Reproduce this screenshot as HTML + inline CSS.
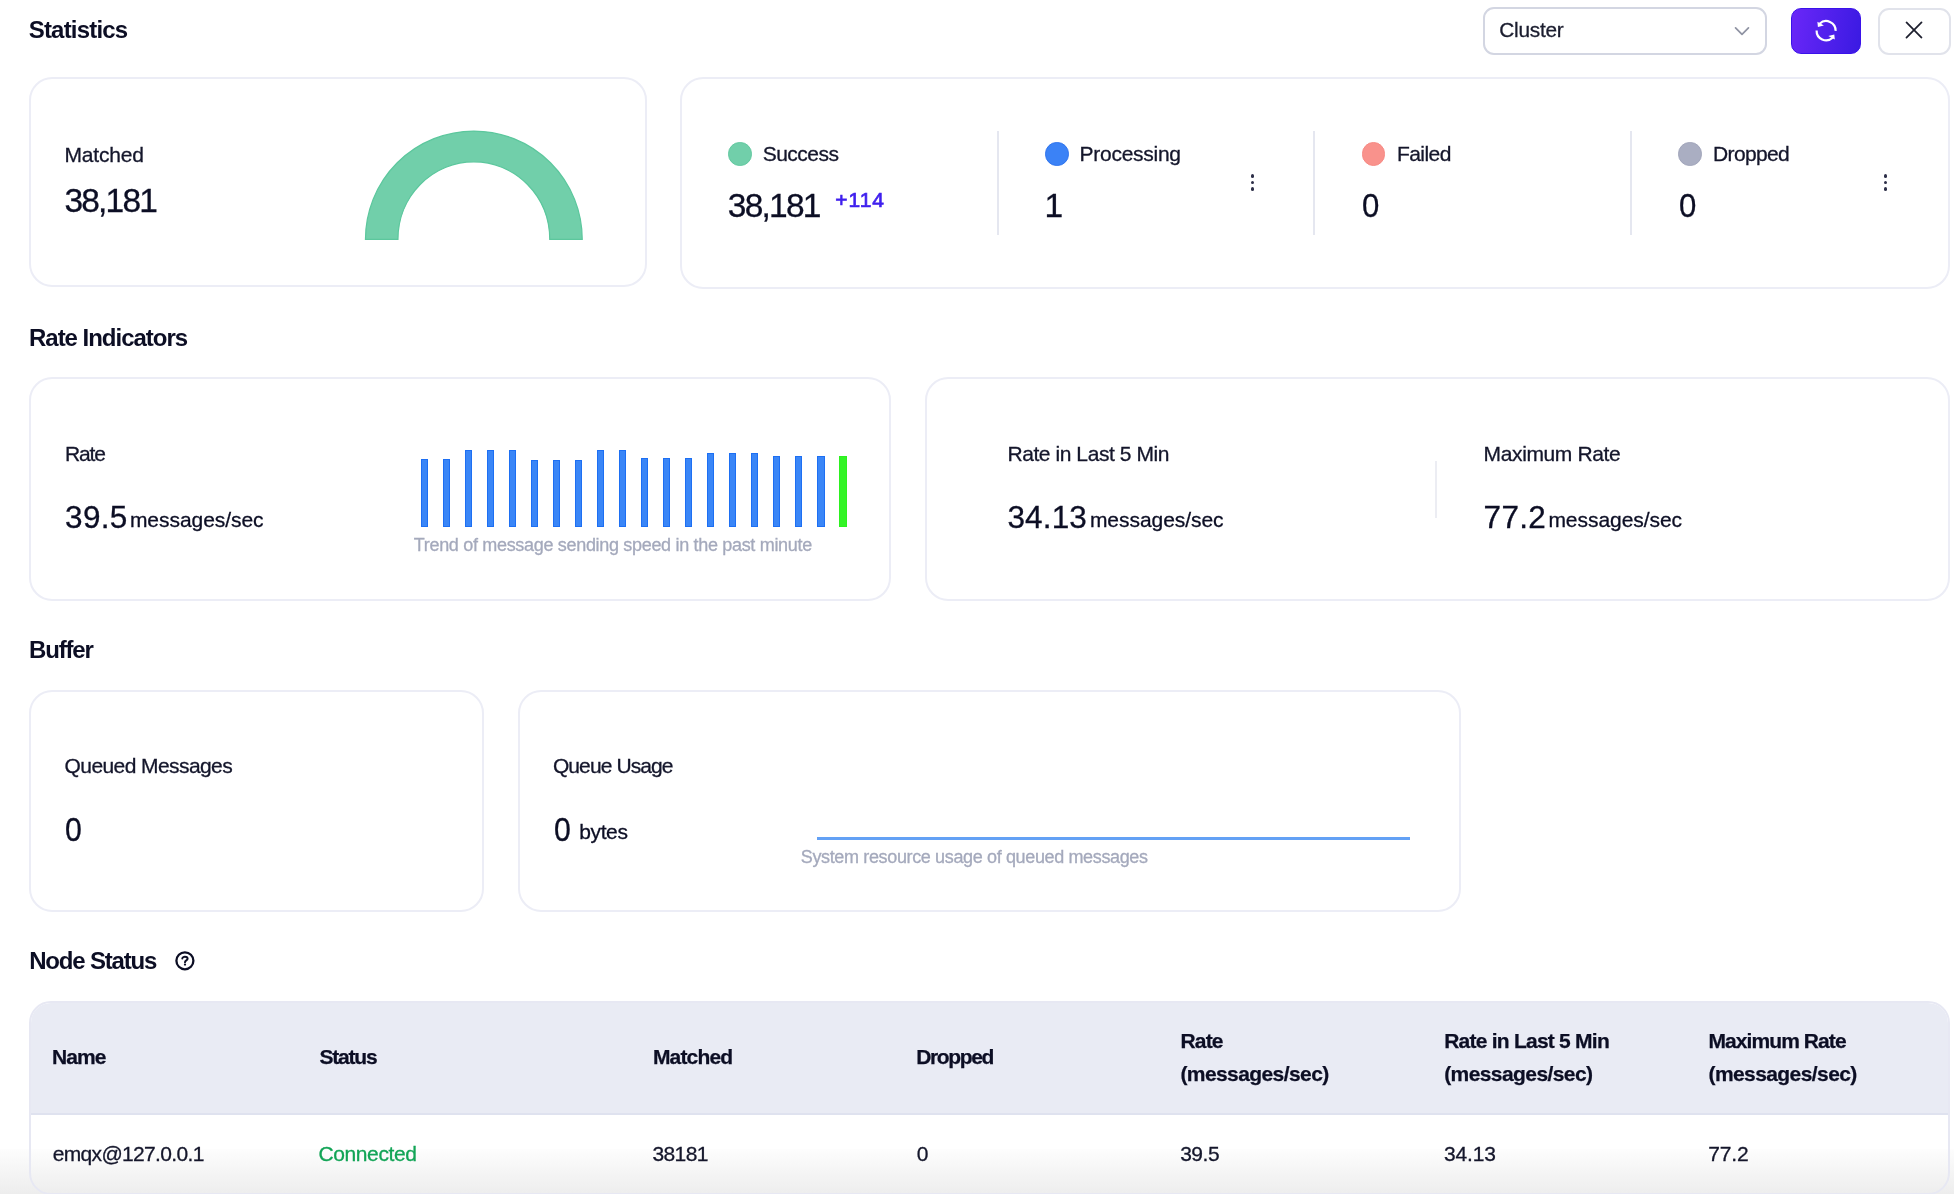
<!DOCTYPE html>
<html lang="en"><head><meta charset="utf-8"><title>Statistics</title>
<style>
html,body{margin:0;padding:0;background:#fff;overflow:hidden;}
body{width:1954px;height:1194px;position:relative;overflow:hidden;font-family:"Liberation Sans",sans-serif;}
.abs{position:absolute;}
.t{position:absolute;margin:0;padding:0;white-space:nowrap;line-height:1;font-family:"Liberation Sans",sans-serif;}
.card{position:absolute;box-sizing:border-box;border:2px solid #ecedf6;background:#fff;}
.dot{position:absolute;box-sizing:border-box;border-radius:50%;}
</style></head><body>
<div class="abs" style="left:0;top:1149px;width:1954px;height:45px;background:linear-gradient(#fdfdfd,#ededed)"></div>
<div class="abs" style="left:1483px;top:7.0px;width:284.4px;height:47.7px;box-sizing:border-box;border:2px solid #d3d6e2;border-radius:11px;background:#fff"></div>
<svg class="abs" style="left:1731px;top:22px" width="22" height="18" viewBox="0 0 22 18"><path d="M4.55 5.8 L11 12.3 L17.45 5.8" fill="none" stroke="#8f93a3" stroke-width="1.7" stroke-linecap="round" stroke-linejoin="round"/></svg>
<div class="abs" style="left:1791px;top:7.7px;width:69.5px;height:46.5px;box-sizing:border-box;border-radius:10px;border:1.5px solid #3a12ea;background:linear-gradient(100deg,#6a27f8,#3a1ae2)"></div>
<svg class="abs" style="left:1810px;top:14px" width="34" height="34" viewBox="1810 14 34 34"><g fill="none" stroke="#fff" stroke-width="2.2"><path d="M1835.6 30.9 A9.5 9.5 0 0 0 1819.6 23.7"/><path d="M1816.6 30.5 A9.5 9.5 0 0 0 1832.6 37.7"/></g><path fill="#fff" d="M1817.4 21.8 L1823.9 25.4 L1817.9 27.0 Z M1834.8 39.6 L1828.3 36.0 L1834.3 34.4 Z"/></svg>
<div class="abs" style="left:1877.5px;top:7.5px;width:73px;height:47px;box-sizing:border-box;border:2px solid #e1e3eb;border-radius:11px;background:#fff"></div>
<svg class="abs" style="left:1900px;top:16.2px" width="28" height="28" viewBox="0 0 1024 1024"><path fill="#1d1f2e" d="M764.288 214.592 512 466.88 259.712 214.592a31.936 31.936 0 0 0-45.12 45.12L466.752 512 214.528 764.224a31.936 31.936 0 1 0 45.12 45.184L512 557.184l252.288 252.288a31.936 31.936 0 0 0 45.12-45.12L557.12 512.064l252.288-252.352a31.936 31.936 0 1 0-45.12-45.184z"/></svg>
<div class="card" style="left:28.65px;top:76.65px;width:617.95px;height:210.25px;border-radius:23.2px;border-width:2.4px"></div>
<div class="card" style="left:679.60px;top:76.65px;width:1270.60px;height:212.25px;border-radius:23.2px;border-width:2.4px"></div>
<div class="card" style="left:28.65px;top:377.20px;width:862.45px;height:223.70px;border-radius:23.2px;border-width:2.4px"></div>
<div class="card" style="left:924.80px;top:377.20px;width:1025.40px;height:223.70px;border-radius:23.2px;border-width:2.4px"></div>
<div class="card" style="left:28.65px;top:689.70px;width:455.25px;height:222.20px;border-radius:23.2px;border-width:2.4px"></div>
<div class="card" style="left:517.60px;top:689.70px;width:943.80px;height:222.20px;border-radius:23.2px;border-width:2.4px"></div>
<svg class="abs" style="left:360px;top:125px" width="230" height="120" viewBox="360 125 230 120"><path d="M365.45 239.4 A108.4 108.4 0 0 1 582.25 239.4 L549.75 239.4 A75.9 77.6 0 0 0 397.95 239.4 Z" fill="#71cfaa" stroke="#5cc79d" stroke-width="1.2"/></svg>
<div class="dot" style="left:728.25px;top:142.05px;width:23.5px;height:23.5px;background:#71cfaa;border:1.5px solid #62c9a0"></div>
<div class="dot" style="left:1045.35px;top:142.05px;width:23.5px;height:23.5px;background:#3b82f6;border:1.5px solid #2f74ee"></div>
<div class="dot" style="left:1361.55px;top:142.05px;width:23.5px;height:23.5px;background:#f9928c;border:1.5px solid #f78a84"></div>
<div class="dot" style="left:1678.25px;top:142.05px;width:23.5px;height:23.5px;background:#aaaec2;border:1.5px solid #a2a6bb"></div>
<div class="abs" style="left:996.50px;top:131px;width:2px;height:103.5px;background:#e5e7f0"></div>
<div class="abs" style="left:1313.20px;top:131px;width:2px;height:103.5px;background:#e5e7f0"></div>
<div class="abs" style="left:1629.90px;top:131px;width:2px;height:103.5px;background:#e5e7f0"></div>
<div class="abs" style="left:1250.60px;top:173.80px;width:3.8px;height:3.8px;border-radius:50%;background:#2d2f48"></div><div class="abs" style="left:1250.60px;top:180.60px;width:3.8px;height:3.8px;border-radius:50%;background:#2d2f48"></div><div class="abs" style="left:1250.60px;top:187.40px;width:3.8px;height:3.8px;border-radius:50%;background:#2d2f48"></div>
<div class="abs" style="left:1883.70px;top:173.80px;width:3.8px;height:3.8px;border-radius:50%;background:#2d2f48"></div><div class="abs" style="left:1883.70px;top:180.60px;width:3.8px;height:3.8px;border-radius:50%;background:#2d2f48"></div><div class="abs" style="left:1883.70px;top:187.40px;width:3.8px;height:3.8px;border-radius:50%;background:#2d2f48"></div>
<div class="abs" style="left:420.50px;top:458.8px;width:7.3px;height:68.00px;box-sizing:border-box;background:#3a86f7;border:1.4px solid #1d6ff3"></div><div class="abs" style="left:442.54px;top:458.8px;width:7.3px;height:68.00px;box-sizing:border-box;background:#3a86f7;border:1.4px solid #1d6ff3"></div><div class="abs" style="left:464.58px;top:450.4px;width:7.3px;height:76.40px;box-sizing:border-box;background:#3a86f7;border:1.4px solid #1d6ff3"></div><div class="abs" style="left:486.62px;top:450.4px;width:7.3px;height:76.40px;box-sizing:border-box;background:#3a86f7;border:1.4px solid #1d6ff3"></div><div class="abs" style="left:508.66px;top:450.4px;width:7.3px;height:76.40px;box-sizing:border-box;background:#3a86f7;border:1.4px solid #1d6ff3"></div><div class="abs" style="left:530.70px;top:460.2px;width:7.3px;height:66.60px;box-sizing:border-box;background:#3a86f7;border:1.4px solid #1d6ff3"></div><div class="abs" style="left:552.74px;top:460.2px;width:7.3px;height:66.60px;box-sizing:border-box;background:#3a86f7;border:1.4px solid #1d6ff3"></div><div class="abs" style="left:574.78px;top:460.2px;width:7.3px;height:66.60px;box-sizing:border-box;background:#3a86f7;border:1.4px solid #1d6ff3"></div><div class="abs" style="left:596.82px;top:450.4px;width:7.3px;height:76.40px;box-sizing:border-box;background:#3a86f7;border:1.4px solid #1d6ff3"></div><div class="abs" style="left:618.86px;top:450.4px;width:7.3px;height:76.40px;box-sizing:border-box;background:#3a86f7;border:1.4px solid #1d6ff3"></div><div class="abs" style="left:640.90px;top:457.5px;width:7.3px;height:69.30px;box-sizing:border-box;background:#3a86f7;border:1.4px solid #1d6ff3"></div><div class="abs" style="left:662.94px;top:457.5px;width:7.3px;height:69.30px;box-sizing:border-box;background:#3a86f7;border:1.4px solid #1d6ff3"></div><div class="abs" style="left:684.98px;top:457.5px;width:7.3px;height:69.30px;box-sizing:border-box;background:#3a86f7;border:1.4px solid #1d6ff3"></div><div class="abs" style="left:707.02px;top:452.8px;width:7.3px;height:74.00px;box-sizing:border-box;background:#3a86f7;border:1.4px solid #1d6ff3"></div><div class="abs" style="left:729.06px;top:452.8px;width:7.3px;height:74.00px;box-sizing:border-box;background:#3a86f7;border:1.4px solid #1d6ff3"></div><div class="abs" style="left:751.10px;top:452.8px;width:7.3px;height:74.00px;box-sizing:border-box;background:#3a86f7;border:1.4px solid #1d6ff3"></div><div class="abs" style="left:773.14px;top:456px;width:7.3px;height:70.80px;box-sizing:border-box;background:#3a86f7;border:1.4px solid #1d6ff3"></div><div class="abs" style="left:795.18px;top:456px;width:7.3px;height:70.80px;box-sizing:border-box;background:#3a86f7;border:1.4px solid #1d6ff3"></div><div class="abs" style="left:817.22px;top:456px;width:7.3px;height:70.80px;box-sizing:border-box;background:#3a86f7;border:1.4px solid #1d6ff3"></div><div class="abs" style="left:839.26px;top:456px;width:7.3px;height:70.80px;box-sizing:border-box;background:#33f426;border:1.4px solid #2df01f"></div>
<div class="abs" style="left:1435.10px;top:460.5px;width:2px;height:57.0px;background:#ecedf3"></div>
<div class="abs" style="left:817.4px;top:837.3px;width:592.4px;height:2.4px;background:#63a1f5"></div>
<svg class="abs" style="left:173px;top:948.9px" width="24" height="24" viewBox="0 0 24 24"><circle cx="11.9" cy="11.8" r="8.5" fill="none" stroke="#0c0e24" stroke-width="2.3"/><path d="M9.3 9.6 C9.3 7.2 14.6 7.2 14.6 9.7 C14.6 11.4 12.0 11.3 12.0 13.2" fill="none" stroke="#0c0e24" stroke-width="2" stroke-linecap="round"/><circle cx="12" cy="15.6" r="1.15" fill="#0c0e24"/></svg>
<div class="abs" style="left:29px;top:1000.5px;width:1921px;height:194.7px;box-sizing:border-box;border:2px solid #e7e8f3;border-radius:22px;overflow:hidden;background:linear-gradient(#fff 0,#fff 146.5px,#fdfdfd 146.5px,#ededed 191.5px)"><div style="position:absolute;left:-2px;top:-2px;width:1921px;height:112px;background:#e9ebf4;border-bottom:2px solid #dfe2ef"></div></div>
<div class="abs" style="left:0;top:0;width:1954px;height:1194px;will-change:transform">
<h2 class="t" style="left:28.70px;top:17.68px;font-size:24px;font-weight:700;color:#0c0e24;letter-spacing:-0.800px;">Statistics</h2>
<span class="t" style="left:1499.20px;top:19.79px;font-size:20.8px;font-weight:400;color:#1a1c2e;letter-spacing:-0.217px;-webkit-text-stroke:0.3px;">Cluster</span>
<span class="t" style="left:64.50px;top:144.42px;font-size:21px;font-weight:400;color:#14162b;letter-spacing:-0.200px;-webkit-text-stroke:0.3px;">Matched</span>
<span class="t" style="left:64.50px;top:184.24px;font-size:33.5px;font-weight:400;color:#0c0e24;letter-spacing:-1.820px;-webkit-text-stroke:0.3px;">38,181</span>
<span class="t" style="left:762.70px;top:142.92px;font-size:21px;font-weight:400;color:#14162b;letter-spacing:-0.500px;-webkit-text-stroke:0.3px;">Success</span>
<span class="t" style="left:727.80px;top:188.94px;font-size:33.5px;font-weight:400;color:#0c0e24;letter-spacing:-1.760px;-webkit-text-stroke:0.3px;">38,181</span>
<span class="t" style="left:835.30px;top:189.22px;font-size:21px;font-weight:400;color:#3f1fee;letter-spacing:1.000px;-webkit-text-stroke:0.7px;">+114</span>
<span class="t" style="left:1079.60px;top:142.92px;font-size:21px;font-weight:400;color:#14162b;letter-spacing:-0.278px;-webkit-text-stroke:0.3px;">Processing</span>
<span class="t" style="left:1044.50px;top:188.94px;font-size:33.5px;font-weight:400;color:#0c0e24;-webkit-text-stroke:0.3px;">1</span>
<span class="t" style="left:1396.90px;top:142.92px;font-size:21px;font-weight:400;color:#14162b;letter-spacing:-0.540px;-webkit-text-stroke:0.3px;">Failed</span>
<span class="t" style="left:1362.00px;top:188.94px;font-size:33.5px;font-weight:400;color:#0c0e24;-webkit-text-stroke:0.3px;transform:scaleX(0.93);transform-origin:0 0;">0</span>
<span class="t" style="left:1713.10px;top:142.92px;font-size:21px;font-weight:400;color:#14162b;letter-spacing:-0.667px;-webkit-text-stroke:0.3px;">Dropped</span>
<span class="t" style="left:1678.70px;top:188.94px;font-size:33.5px;font-weight:400;color:#0c0e24;-webkit-text-stroke:0.3px;transform:scaleX(0.93);transform-origin:0 0;">0</span>
<h2 class="t" style="left:29.00px;top:326.28px;font-size:24px;font-weight:700;color:#0c0e24;letter-spacing:-1.021px;">Rate Indicators</h2>
<span class="t" style="left:65.10px;top:443.42px;font-size:21px;font-weight:400;color:#14162b;letter-spacing:-1.167px;-webkit-text-stroke:0.3px;">Rate</span>
<span class="t" style="left:65.10px;top:501.84px;font-size:31.5px;font-weight:400;color:#0c0e24;letter-spacing:0.300px;-webkit-text-stroke:0.3px;">39.5</span>
<span class="t" style="left:129.90px;top:508.72px;font-size:21px;font-weight:400;color:#0c0e24;letter-spacing:-0.045px;-webkit-text-stroke:0.3px;">messages/sec</span>
<span class="t" style="left:413.80px;top:535.76px;font-size:18px;font-weight:400;color:#a4a9bc;letter-spacing:-0.317px;-webkit-text-stroke:0.3px;">Trend of message sending speed in the past minute</span>
<span class="t" style="left:1007.40px;top:443.12px;font-size:21px;font-weight:400;color:#14162b;letter-spacing:-0.424px;-webkit-text-stroke:0.3px;">Rate in Last 5 Min</span>
<span class="t" style="left:1007.40px;top:501.84px;font-size:31.5px;font-weight:400;color:#0c0e24;letter-spacing:0.150px;-webkit-text-stroke:0.3px;">34.13</span>
<span class="t" style="left:1089.90px;top:508.72px;font-size:21px;font-weight:400;color:#0c0e24;letter-spacing:-0.045px;-webkit-text-stroke:0.3px;">messages/sec</span>
<span class="t" style="left:1483.60px;top:443.12px;font-size:21px;font-weight:400;color:#14162b;letter-spacing:-0.373px;-webkit-text-stroke:0.3px;">Maximum Rate</span>
<span class="t" style="left:1483.60px;top:501.84px;font-size:31.5px;font-weight:400;color:#0c0e24;letter-spacing:0.300px;-webkit-text-stroke:0.3px;">77.2</span>
<span class="t" style="left:1548.40px;top:508.72px;font-size:21px;font-weight:400;color:#0c0e24;letter-spacing:-0.045px;-webkit-text-stroke:0.3px;">messages/sec</span>
<h2 class="t" style="left:29.00px;top:638.28px;font-size:24px;font-weight:700;color:#0c0e24;letter-spacing:-1.180px;">Buffer</h2>
<span class="t" style="left:64.60px;top:755.22px;font-size:21px;font-weight:400;color:#14162b;letter-spacing:-0.586px;-webkit-text-stroke:0.3px;">Queued Messages</span>
<span class="t" style="left:65.10px;top:814.09px;font-size:32.5px;font-weight:400;color:#0c0e24;-webkit-text-stroke:0.3px;transform:scaleX(0.93);transform-origin:0 0;">0</span>
<span class="t" style="left:552.90px;top:755.22px;font-size:21px;font-weight:400;color:#14162b;letter-spacing:-0.900px;-webkit-text-stroke:0.3px;">Queue Usage</span>
<span class="t" style="left:553.60px;top:814.09px;font-size:32.5px;font-weight:400;color:#0c0e24;-webkit-text-stroke:0.3px;transform:scaleX(0.93);transform-origin:0 0;">0</span>
<span class="t" style="left:579.30px;top:821.12px;font-size:21px;font-weight:400;color:#0c0e24;letter-spacing:-0.400px;-webkit-text-stroke:0.3px;">bytes</span>
<span class="t" style="left:800.80px;top:848.16px;font-size:18px;font-weight:400;color:#a4a9bc;letter-spacing:-0.359px;-webkit-text-stroke:0.3px;">System resource usage of queued messages</span>
<h2 class="t" style="left:29.20px;top:949.28px;font-size:24px;font-weight:700;color:#0c0e24;letter-spacing:-1.180px;">Node Status</h2>
<span class="t" style="left:52.10px;top:1046.12px;font-size:21px;font-weight:700;color:#0c0e24;letter-spacing:-0.967px;-webkit-text-stroke:0.25px;">Name</span>
<span class="t" style="left:319.40px;top:1046.12px;font-size:21px;font-weight:700;color:#0c0e24;letter-spacing:-1.180px;-webkit-text-stroke:0.25px;">Status</span>
<span class="t" style="left:652.90px;top:1046.12px;font-size:21px;font-weight:700;color:#0c0e24;letter-spacing:-0.817px;-webkit-text-stroke:0.25px;">Matched</span>
<span class="t" style="left:916.20px;top:1046.12px;font-size:21px;font-weight:700;color:#0c0e24;letter-spacing:-1.367px;-webkit-text-stroke:0.25px;">Dropped</span>
<span class="t" style="left:1180.40px;top:1029.62px;font-size:21px;font-weight:700;color:#0c0e24;letter-spacing:-0.800px;-webkit-text-stroke:0.25px;">Rate</span>
<span class="t" style="left:1180.40px;top:1063.22px;font-size:21px;font-weight:700;color:#0c0e24;letter-spacing:-0.585px;-webkit-text-stroke:0.25px;">(messages/sec)</span>
<span class="t" style="left:1444.20px;top:1029.62px;font-size:21px;font-weight:700;color:#0c0e24;letter-spacing:-0.765px;-webkit-text-stroke:0.25px;">Rate in Last 5 Min</span>
<span class="t" style="left:1444.20px;top:1063.22px;font-size:21px;font-weight:700;color:#0c0e24;letter-spacing:-0.585px;-webkit-text-stroke:0.25px;">(messages/sec)</span>
<span class="t" style="left:1708.50px;top:1029.62px;font-size:21px;font-weight:700;color:#0c0e24;letter-spacing:-0.918px;-webkit-text-stroke:0.25px;">Maximum Rate</span>
<span class="t" style="left:1708.50px;top:1063.22px;font-size:21px;font-weight:700;color:#0c0e24;letter-spacing:-0.585px;-webkit-text-stroke:0.25px;">(messages/sec)</span>
<span class="t" style="left:52.70px;top:1143.12px;font-size:21px;font-weight:400;color:#14162b;letter-spacing:-0.662px;-webkit-text-stroke:0.3px;">emqx@127.0.0.1</span>
<span class="t" style="left:318.50px;top:1143.12px;font-size:21px;font-weight:400;color:#12a456;letter-spacing:-0.400px;-webkit-text-stroke:0.3px;">Connected</span>
<span class="t" style="left:652.40px;top:1143.12px;font-size:21px;font-weight:400;color:#14162b;letter-spacing:-0.600px;-webkit-text-stroke:0.3px;">38181</span>
<span class="t" style="left:916.80px;top:1143.12px;font-size:21px;font-weight:400;color:#14162b;-webkit-text-stroke:0.3px;">0</span>
<span class="t" style="left:1180.20px;top:1143.12px;font-size:21px;font-weight:400;color:#14162b;letter-spacing:-0.500px;-webkit-text-stroke:0.3px;">39.5</span>
<span class="t" style="left:1444.00px;top:1143.12px;font-size:21px;font-weight:400;color:#14162b;letter-spacing:-0.125px;-webkit-text-stroke:0.3px;">34.13</span>
<span class="t" style="left:1708.30px;top:1143.12px;font-size:21px;font-weight:400;color:#14162b;letter-spacing:-0.167px;-webkit-text-stroke:0.3px;">77.2</span>
</div>
</body></html>
